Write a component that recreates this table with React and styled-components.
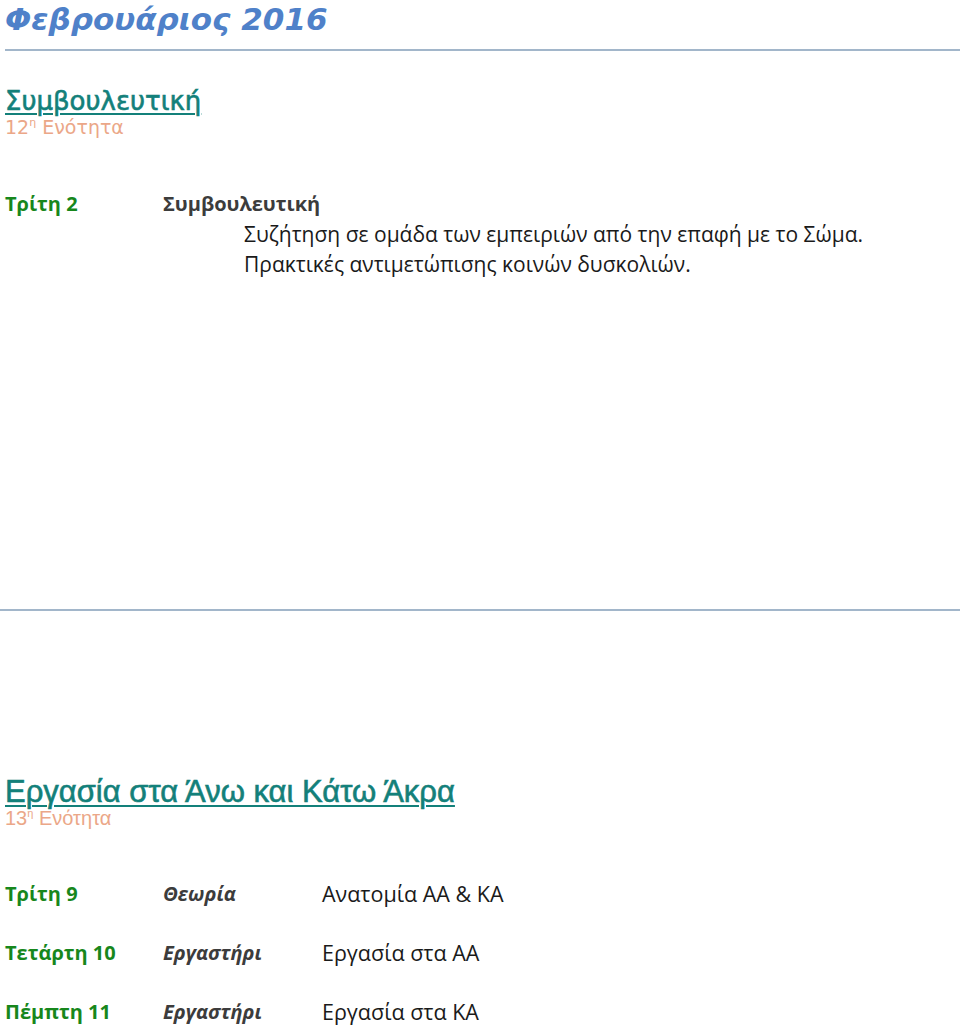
import React from "react";
import styled, { createGlobalStyle } from "styled-components";

const GlobalStyle = createGlobalStyle`
  body {
    margin: 0;
    background: #ffffff;
    font-family: "Open Sans", "Liberation Sans", sans-serif;
  }
`;

const firstUnit = {
  title: "Συμβουλευτική",
  number: "12",
  day: "Τρίτη 2",
  subject: "Συμβουλευτική",
  lines: [
    "Συζήτηση σε ομάδα των εμπειριών από την επαφή με το Σώμα.",
    "Πρακτικές αντιμετώπισης κοινών δυσκολιών.",
  ],
};

const secondRows = [
  { day: "Τρίτη 9", kind: "Θεωρία", topic: "Ανατομία ΑΑ & ΚΑ" },
  { day: "Τετάρτη 10", kind: "Εργαστήρι", topic: "Εργασία στα ΑΑ" },
  { day: "Πέμπτη 11", kind: "Εργαστήρι", topic: "Εργασία στα ΚΑ" },
];

const App = () => {
  return (
    <Page>
      <GlobalStyle />
      <MonthTitle>Φεβρουάριος 2016</MonthTitle>
      <Rule $inset />

      <Section $top={35}>
        <SectionHeading $verdana>{firstUnit.title}</SectionHeading>
        <UnitLabel $verdana>
          {firstUnit.number}
          <sup>η</sup> Ενότητα
        </UnitLabel>

        <DayBlock>
          <Day>{firstUnit.day}</Day>
          <div>
            <Subject>{firstUnit.subject}</Subject>
            {firstUnit.lines.map((line) => (
              <DetailLine key={line}>{line}</DetailLine>
            ))}
          </div>
        </DayBlock>
      </Section>

      <Rule $top={330} />

      <Section $top={166}>
        <SectionHeading>Εργασία στα Άνω και Κάτω Άκρα</SectionHeading>
        <UnitLabel>
          13<sup>η</sup> Ενότητα
        </UnitLabel>

        <Schedule>
          {secondRows.map((row) => (
            <React.Fragment key={row.day}>
              <Day>{row.day}</Day>
              <Kind>{row.kind}</Kind>
              <Topic>{row.topic}</Topic>
            </React.Fragment>
          ))}
        </Schedule>
      </Section>
    </Page>
  );
};

const Page = styled.div`
  width: 960px;
  height: 1028px;
  overflow: hidden;
`;

const MonthTitle = styled.h1`
  margin: 0;
  padding-left: 5px;
  font-family: "DejaVu Sans", Verdana, sans-serif;
  font-style: italic;
  font-weight: 700;
  font-size: 31px;
  line-height: 38px;
  color: #4f81c9;
`;

const Rule = styled.div`
  margin: ${(p) => (p.$top ? p.$top : 11)}px 0 0 ${(p) => (p.$inset ? 5 : 0)}px;
  height: 2px;
  background: #a2b6ca;
`;

const Section = styled.section`
  margin-top: ${(p) => p.$top}px;
  padding-left: 5px;
`;

const SectionHeading = styled.h2`
  margin: 0;
  font-family: ${(p) =>
    p.$verdana ? `"DejaVu Sans", Verdana, sans-serif` : `"Liberation Sans", Arial, sans-serif`};
  font-weight: 400;
  font-size: ${(p) => (p.$verdana ? 26 : 31)}px;
  line-height: 30px;
  color: #13807a;
  text-decoration: underline;
  text-decoration-thickness: 2px;
  text-underline-offset: 3px;
  -webkit-text-stroke: 0.6px #13807a;
`;

const UnitLabel = styled.div`
  font-family: ${(p) =>
    p.$verdana ? `"DejaVu Sans", Verdana, sans-serif` : `"Liberation Sans", Arial, sans-serif`};
  font-size: ${(p) => (p.$verdana ? 19 : 20)}px;
  line-height: 22px;
  color: #eba788;

  sup {
    font-size: 11px;
    vertical-align: 8px;
    line-height: 0;
  }
`;

const DayBlock = styled.div`
  display: grid;
  grid-template-columns: 158px auto;
  margin-top: 51px;
  font-size: 21px;
  line-height: 30px;
`;

const Day = styled.div`
  font-weight: 700;
  color: #17871c;
  font-size: 20px;
`;

const Subject = styled.div`
  font-weight: 700;
  font-size: 20px;
  color: #3c3c3c;
`;

const DetailLine = styled.div`
  padding-left: 81px;
  color: #1a1a1a;
`;

const Schedule = styled.div`
  display: grid;
  grid-template-columns: 158px 159px auto;
  grid-auto-rows: 59px;
  align-items: center;
  margin-top: 35px;
  font-size: 21.5px;
  line-height: 30px;
`;

const Kind = styled.div`
  font-style: italic;
  font-weight: 700;
  font-size: 20px;
  color: #3c3c3c;
`;

const Topic = styled.div`
  color: #1a1a1a;
`;

export default App;
